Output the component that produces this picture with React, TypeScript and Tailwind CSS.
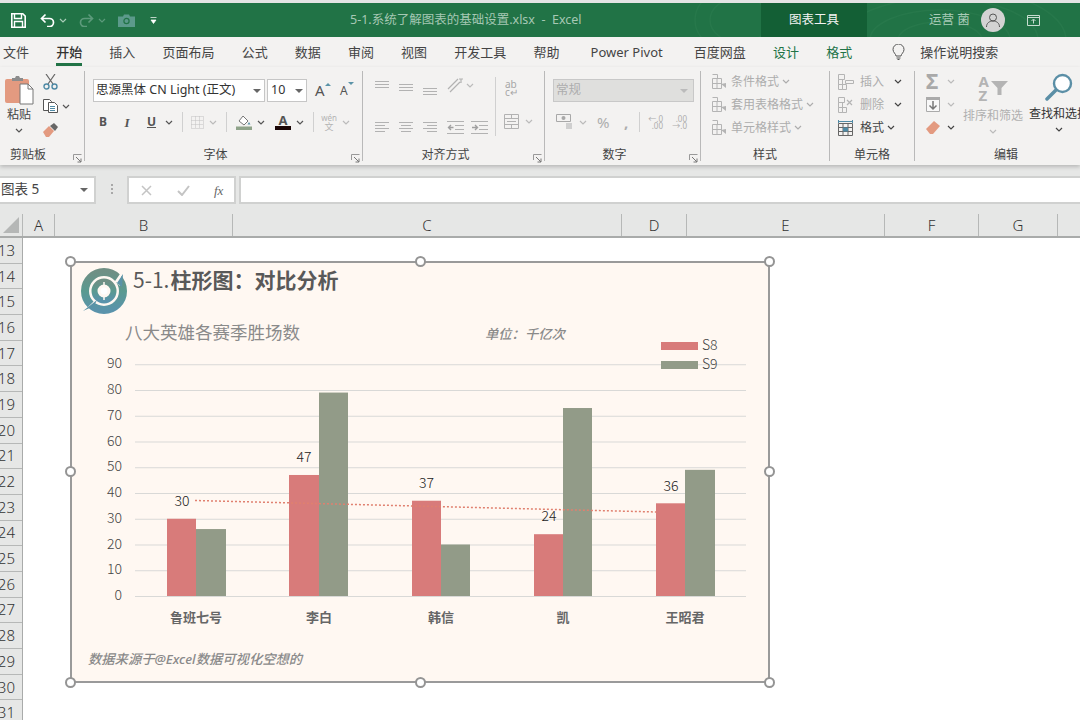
import React from 'react';

const cjk = "font-['Noto_Sans','Noto_Sans_CJK_SC',sans-serif]";
const light = "font-['Noto_Sans_CJK_SC',sans-serif] font-light";

const tabs = [
  { label: '文件' },
  { label: '开始', active: true },
  { label: '插入' },
  { label: '页面布局' },
  { label: '公式' },
  { label: '数据' },
  { label: '审阅' },
  { label: '视图' },
  { label: '开发工具' },
  { label: '帮助' },
  { label: 'Power Pivot', extra: true },
  { label: '百度网盘', extra: true },
  { label: '设计', green: true },
  { label: '格式', green: true },
];

const columns = [
  { label: 'A', w: 32 },
  { label: 'B', w: 178 },
  { label: 'C', w: 389 },
  { label: 'D', w: 65 },
  { label: 'E', w: 198 },
  { label: 'F', w: 94 },
  { label: 'G', w: 79 },
  { label: '', w: 22 },
];

const rows = Array.from({ length: 19 }, (_, i) => 13 + i);

const series = [
  { name: '鲁班七号', x1: 167, w1: 29, x2: 196, w2: 30, s8: 30, s9: 26, lx: 182, ly: 506 },
  { name: '李白', x1: 289, w1: 30, x2: 319, w2: 29, s8: 47, s9: 79, lx: 304, ly: 462 },
  { name: '韩信', x1: 412, w1: 29, x2: 441, w2: 29, s8: 37, s9: 20, lx: 426.5, ly: 488 },
  { name: '凯', x1: 534, w1: 29, x2: 563, w2: 29, s8: 24, s9: 73, lx: 549, ly: 521 },
  { name: '王昭君', x1: 656, w1: 29, x2: 685, w2: 30, s8: 36, s9: 49, lx: 671, ly: 491 },
];

const Chev = ({ c = '#555', className = '' }: { c?: string; className?: string }) => (
  <svg width="8" height="5" viewBox="0 0 8 5" className={className}>
    <path d="M1 1l3 3 3-3" fill="none" stroke={c} strokeWidth="1.2" />
  </svg>
);

const Caret = ({ c = '#666' }: { c?: string }) => (
  <svg width="8" height="4" viewBox="0 0 8 4">
    <path d="M0 0h8L4 4z" fill={c} />
  </svg>
);

const Launcher = () => (
  <svg width="9" height="9" viewBox="0 0 9 9">
    <path d="M0.5 6V0.5H8.5M0.5 0.5" fill="none" stroke="#999" />
    <path d="M3 3l5 5M8 4.5V8H4.5" fill="none" stroke="#777" />
  </svg>
);

const Lines = ({ kind }: { kind: 'left' | 'center' | 'right' }) => {
  const x = kind === 'left' ? [0, 0, 0, 0] : kind === 'center' ? [0, 2, 0, 2] : [0, 4, 0, 4];
  return (
    <svg width="14" height="11" viewBox="0 0 14 11">
      {[0.5, 3.5, 6.5, 9.5].map((y, i) => (
        <line key={y} x1={x[i]} x2={x[i] + (i % 2 ? 10 : 14)} y1={y} y2={y} stroke="#b2b2b2" />
      ))}
    </svg>
  );
};

const Three = () => (
  <svg width="14" height="7" viewBox="0 0 14 7">
    {[0.5, 3.5, 6.5].map((y) => (
      <line key={y} x1="0" x2="14" y1={y} y2={y} stroke="#b2b2b2" />
    ))}
  </svg>
);

const Indent = ({ flip }: { flip?: boolean }) => (
  <svg width="17" height="13" viewBox="0 0 17 13">
    {[0.5, 4.5, 8.5, 12.5].map((y) => (
      <line key={y} x1={y === 0.5 || y === 12.5 ? 0 : 8} x2="17" y1={y} y2={y} stroke="#b2b2b2" />
    ))}
    <path d={flip ? 'M1 6.5h5M4 4l2.5 2.5L4 9' : 'M6.5 6.5h-5M4 4L1.5 6.5 4 9'} fill="none" stroke="#a0a0a0" strokeWidth="1.4" />
  </svg>
);

const GridIcon = ({ c = '#b4b4b4' }: { c?: string }) => (
  <svg width="15" height="15" viewBox="0 0 15 15">
    <path d="M0.5 4.5h9v10h-9zM0.5 9.5h9M5 4.5v10M0.5 0.5h5v4" fill="none" stroke={c} />
    <path d="M9 10l5 4v-5z" fill={c} />
  </svg>
);

const CellIcon = ({ kind }: { kind: 'insert' | 'delete' }) => (
  <svg width="17" height="16" viewBox="0 0 17 16">
    <path d="M0.5 0.5h6v5h-6zM0.5 10.5h4v5h-4zM4.5 10.5h4v5h-4zM0.5 5.5h4v5h-4z" fill="none" stroke="#b4b4b4" />
    {kind === 'insert' ? (
      <path d="M7.5 6.5h8v3h-8z" fill="none" stroke="#b4b4b4" />
    ) : (
      <path d="M9 3l5 5M14 3l-5 5" stroke="#b4b4b4" strokeWidth="1.2" />
    )}
  </svg>
);

const Group = ({ w, label, launcher, pad = 0, children }: { w: number; label: string; launcher?: boolean; pad?: number; children: React.ReactNode }) => (
  <div className="flex flex-col shrink-0 h-[90px] border-r border-[#b9b9b9]" style={{ width: w }}>
    <div className="h-[71px]">{children}</div>
    <div className="flex-1 flex items-center relative pt-[7px]" style={{ paddingRight: pad }}>
      <span className="w-full text-center text-[12px] text-[#444] leading-none">{label}</span>
      {launcher && (
        <span className="absolute right-[2px] bottom-[-2px] flex">
          <Launcher />
        </span>
      )}
    </div>
  </div>
);

const StyleRow = ({ icon, text }: { icon: React.ReactNode; text: string }) => (
  <div className="flex items-center h-[23px]">
    {icon}
    <span className="ml-[4px] text-[12px] leading-none text-[#adadad]">{text}</span>
    <Chev c="#adadad" className="ml-[3px]" />
  </div>
);

const TitleBar = () => (
  <div className="relative h-[37px] bg-[#217346] border-t-[3px] border-[#e4e4e4] flex items-center shrink-0 overflow-hidden">
    <svg className="absolute left-[690px] top-[-3px]" width="390" height="37" viewBox="0 0 390 37">
      {[30, 45, 60, 75, 90, 110].map((r) => (
        <ellipse key={r} cx="50" cy="20" rx={r} ry={r * 0.75} fill="none" stroke="#27784b" strokeWidth="1.5" />
      ))}
      {[30, 50, 70, 90].map((r) => (
        <ellipse key={r} cx="250" cy="40" rx={r * 1.4} ry={r * 0.6} fill="none" stroke="#27784b" strokeWidth="1.5" />
      ))}
    </svg>
    <div className="relative flex items-center w-[350px] pl-[11px]">
      <svg width="15" height="15" viewBox="0 0 15 15">
        <path d="M0.8 0.8h11l2.4 2.4v11H0.8z" fill="none" stroke="#fff" strokeWidth="1.6" />
        <path d="M3.5 1v4.5h7V1M3.5 14V8.5h8V14" fill="none" stroke="#fff" strokeWidth="1.4" />
      </svg>
      <svg className="ml-[14px]" width="15" height="14" viewBox="0 0 15 14">
        <path d="M1.5 5.5h8a4 4 0 0 1 0 8H7M5.5 1.5l-4 4 4 4" fill="none" stroke="#fff" strokeWidth="1.7" />
      </svg>
      <Chev c="#a9cdb8" className="ml-[4px]" />
      <svg className="ml-[12px]" width="15" height="14" viewBox="0 0 15 14">
        <path d="M13.5 5.5h-8a4 4 0 0 0 0 8H8M9.5 1.5l4 4-4 4" fill="none" stroke="#5c9a7b" strokeWidth="1.7" />
      </svg>
      <Chev c="#5c9a7b" className="ml-[4px]" />
      <svg className="ml-[12px]" width="17" height="13" viewBox="0 0 17 13">
        <path d="M0 2.5h5l1-2h5l1 2h5V13H0z" fill="#5c9a8b" />
        <circle cx="8.5" cy="7" r="2.6" fill="none" stroke="#217346" strokeWidth="1.2" />
      </svg>
      <svg className="ml-[15px]" width="7" height="7" viewBox="0 0 7 7">
        <path d="M0.5 0.5h6M1 3h5L3.5 6.5z" fill="#fff" stroke="#fff" strokeWidth="0.7" />
      </svg>
    </div>
    <span className={`relative text-[12.5px] text-[#a6c8b4] whitespace-pre w-[411px] ${cjk}`}>5-1.系统了解图表的基础设置.xlsx  -  Excel</span>
    <div className="relative w-[106px] h-full bg-[#135f35] flex items-center justify-center">
      <span className={`text-[12.5px] text-[#f2f2f2] ${cjk}`}>图表工具</span>
    </div>
    <span className={`relative ml-[62px] text-[12.5px] text-[#a9cbb7] whitespace-pre ${cjk}`}>运营 菌</span>
    <div className="relative ml-[11px] w-[24px] h-[24px] rounded-full bg-[#d3d3d3] flex items-center justify-center">
      <svg width="16" height="16" viewBox="0 0 16 16">
        <circle cx="8" cy="5.5" r="3.5" fill="none" stroke="#555" />
        <path d="M1.5 15c0-4 3-6 6.5-6s6.5 2 6.5 6" fill="none" stroke="#555" />
      </svg>
    </div>
    <svg className="relative ml-[22px]" width="13" height="11" viewBox="0 0 13 11">
      <path d="M0.5 0.5h12v10H0.5zM0.5 2.5h12M6.5 8.5v-4M4.5 6l2-2 2 2" fill="none" stroke="#c7ddd0" />
    </svg>
  </div>
);

const TabBar = () => (
  <div className={`h-[30px] bg-[#f3f2f1] flex items-center pl-[3px] gap-[27.15px] text-[13px] text-[#444] shrink-0 ${cjk}`}>
    {tabs.map((t) => (
      <span
        key={t.label}
        className={`relative leading-none whitespace-nowrap ${t.active ? 'font-medium text-[#333]' : ''} ${t.green ? 'text-[#217346]' : ''} ${t.extra ? 'ml-[4px]' : ''}`}
      >
        {t.label}
        {t.active && <span className="absolute left-0 right-0 top-[17px] h-[3px] bg-[#217346]" />}
      </span>
    ))}
    <span className="flex items-center ml-[13px] gap-[15px]">
      <svg width="13" height="16" viewBox="0 0 13 16">
        <path d="M4 12c0-2-3-3.500-3-6.500a5.500 5.500 0 0 1 11 0C12 8.500 9 10 9 12zM4.500 14h4M5.500 15.500h2" fill="none" stroke="#555" />
      </svg>
      <span className="leading-none">操作说明搜索</span>
    </span>
  </div>
);

const Ribbon = () => (
  <div className={`relative h-[98px] bg-[#f3f2f1] flex items-start pt-[4px] shrink-0 shadow-[0_2px_4px_rgba(0,0,0,0.2)] ${cjk}`}>
    <Group w={85} label="剪贴板" launcher pad={28}>
      <div className="flex pt-[5px] pl-[6px]">
        <div className="flex flex-col items-center w-[26px]">
          <svg width="29" height="30" viewBox="0 0 29 30" className="shrink-0">
            <rect x="0" y="3" width="24" height="24" rx="2" fill="#e39a80" />
            <path d="M7 5V2h3l1-2h3l1 2h3v3z" fill="#8c8c8c" />
            <path d="M15 8h8l5 5v15H15z" fill="#fff" stroke="#777" />
            <path d="M23 8v5h5" fill="none" stroke="#777" />
          </svg>
          <span className="text-[12px] text-[#444] leading-none mt-[3px]">粘贴</span>
          <Chev className="mt-[7px]" />
        </div>
        <div className="flex flex-col items-start ml-[11px] -mt-[2px]">
          <svg width="15" height="16" viewBox="0 0 15 16">
            <path d="M3 0l7 10M12 0L5 10" stroke="#666" strokeWidth="1.2" />
            <circle cx="3.500" cy="12.500" r="2.500" fill="none" stroke="#4f8aa5" strokeWidth="1.400" />
            <circle cx="11.500" cy="12.500" r="2.500" fill="none" stroke="#4f8aa5" strokeWidth="1.400" />
          </svg>
          <div className="flex items-center mt-[9px]">
            <svg width="15" height="14" viewBox="0 0 15 14">
              <path d="M0.500 0.500h6l2 2v9h-8z" fill="#fff" stroke="#555" />
              <path d="M5.500 3.500h6l3 3v7h-9z" fill="#fff" stroke="#555" />
              <path d="M7 7.500h5M7 9.500h5M7 11.500h5" stroke="#4f8aa5" />
            </svg>
            <Chev className="ml-[4px]" />
          </div>
          <svg className="mt-[10px]" width="16" height="14" viewBox="0 0 16 14">
            <path d="M0 9l6-6 5 5-5 6H3z" fill="#e39a80" />
            <path d="M7 3l5 5 3-4-4-4z" fill="#666" />
          </svg>
        </div>
      </div>
    </Group>

    <Group w={278} label="字体" launcher pad={16}>
      <div className="flex flex-col pt-[8px] pl-[8px]">
        <div className="flex items-center">
          <div className="w-[172px] h-[23px] bg-white border border-[#c6c6c6] flex items-center justify-between pl-[2px] pr-[3px]">
            <span className="text-[12.5px] text-[#333] leading-none">思源黑体 CN Light (正文)</span>
            <Caret />
          </div>
          <div className="ml-[2px] w-[40px] h-[23px] bg-white border border-[#c6c6c6] flex items-center justify-between pl-[3px] pr-[3px]">
            <span className="text-[12.5px] text-[#333] leading-none">10</span>
            <Caret />
          </div>
          <span className="ml-[8px] relative text-[15px] leading-none text-[#555] w-[11px]">
            A<span className="absolute right-[-5px] top-[0px] border-x-[3px] border-b-[3px] border-x-transparent border-b-[#5b93a8]" />
          </span>
          <span className="ml-[14px] relative text-[12px] leading-none text-[#555] w-[9px]">
            A<span className="absolute right-[-5px] top-[-3px] border-x-[3px] border-t-[3px] border-x-transparent border-t-[#5b93a8]" />
          </span>
        </div>
        <div className="flex items-center h-[26px] mt-[7px] pl-[5px]">
          <span className="w-[10px] text-center text-[12px] font-bold text-[#555] leading-none">B</span>
          <span className="ml-[14px] w-[10px] text-center text-[13px] italic font-bold text-[#555] leading-none font-['Liberation_Serif',serif]">I</span>
          <span className="ml-[14px] w-[11px] text-center text-[12px] font-bold underline text-[#555] leading-none">U</span>
          <Chev className="ml-[8px]" />
          <span className="ml-[9px] w-px h-[20px] bg-[#d0d0d0]" />
          <svg className="ml-[8px]" width="13" height="13" viewBox="0 0 13 13">
            <path d="M0.500 0.500h12v12h-12zM4.500 0.500v12M8.500 0.500v12M0.500 4.500h12M0.500 8.500h12" fill="none" stroke="#c0c0c0" strokeDasharray="1 1" />
          </svg>
          <Chev c="#bbb" className="ml-[5px]" />
          <span className="ml-[9px] w-px h-[20px] bg-[#d0d0d0]" />
          <svg className="ml-[9px]" width="16" height="16" viewBox="0 0 16 16">
            <path d="M3 7l4-5 5 5-4 4z" fill="#fff" stroke="#777" />
            <path d="M13 8l1.500 2.500h-3z" fill="#5b93a8" />
            <rect x="0" y="12.500" width="16" height="3.500" fill="#8fa38a" />
          </svg>
          <Chev className="ml-[5px]" />
          <span className="ml-[10px] w-[16px] flex flex-col items-center">
            <span className="text-[13px] font-bold leading-[12px] text-[#555]">A</span>
            <span className="block w-[16px] h-[4px] bg-[#1a0606]" />
          </span>
          <Chev className="ml-[5px]" />
          <span className="ml-[9px] w-px h-[20px] bg-[#d0d0d0]" />
          <span className="ml-[7px] w-[16px] flex flex-col items-center text-[#b4b4b4] leading-[9px] text-[8px]">
            <span>wén</span>
            <span className="text-[9px]">文</span>
          </span>
          <Chev c="#bbb" className="ml-[5px]" />
        </div>
      </div>
    </Group>

    <Group w={182} label="对齐方式" launcher pad={16}>
      <div className="flex">
        <div className="flex flex-col pl-[12px] pt-[10px]">
          <div className="flex items-start h-[22px]">
            <span className="w-[24px] flex"><Three /></span>
            <span className="w-[24px] flex pt-[3px]"><Three /></span>
            <span className="w-[24px] flex pt-[7px]"><Three /></span>
            <svg className="-mt-[3px]" width="17" height="15" viewBox="0 0 17 15">
              <path d="M1 11L11 1M3 14L13 4M14 1v4M12 1h4" fill="none" stroke="#b2b2b2" strokeWidth="1.200" />
            </svg>
            <Chev c="#bbb" className="ml-[2px] mt-[2px]" />
          </div>
          <div className="flex items-center h-[22px] mt-[13px]">
            <span className="w-[24px] flex"><Lines kind="left" /></span>
            <span className="w-[24px] flex"><Lines kind="center" /></span>
            <span className="w-[24px] flex"><Lines kind="right" /></span>
            <span className="w-[24px] flex"><Indent /></span>
            <span className="flex"><Indent flip /></span>
          </div>
        </div>
        <div className="ml-[7px] mt-[6px] w-px h-[59px] bg-[#d0d0d0]" />
        <div className="flex flex-col pl-[9px] pt-[9px]">
          <span className="text-[10px] text-[#a6a6a6] leading-[8px] w-[16px]">ab</span>
          <span className="text-[10px] text-[#a6a6a6] leading-[8px] w-[16px]">c↵</span>
          <div className="flex items-center mt-[18px] -ml-px">
            <svg width="15" height="15" viewBox="0 0 15 15">
              <path d="M0.500 0.500h14v14h-14zM0.500 4.500h14M0.500 10.500h14M7.500 0.500v4M7.500 10.500v4M3 7.500h9" fill="none" stroke="#b2b2b2" />
            </svg>
            <Chev c="#bbb" className="ml-[6px]" />
          </div>
        </div>
      </div>
    </Group>

    <Group w={156} label="数字" launcher pad={16}>
      <div className="flex flex-col pt-[8px] pl-[8px]">
        <div className="w-[141px] h-[23px] bg-[#dfdfdd] border border-[#c8c8c8] flex items-center justify-between pl-[2px] pr-[5px]">
          <span className="text-[12.5px] text-[#adadad] leading-none">常规</span>
          <Caret c="#bbb" />
        </div>
        <div className="flex items-center h-[22px] mt-[9px] pl-[3px] text-[#adadad]">
          <svg width="17" height="16" viewBox="0 0 17 16">
            <path d="M0.500 0.500h14v7h-14z" fill="none" stroke="#a8a8a8" />
            <circle cx="7.500" cy="4" r="2" fill="#a8a8a8" />
            <path d="M10 10h6M10 12h6M10 14h6" stroke="#c4c4c4" strokeWidth="1.500" />
          </svg>
          <Chev c="#bbb" className="ml-[6px]" />
          <span className="ml-[10px] text-[15px] leading-none w-[14px]">%</span>
          <span className="ml-[13px] text-[15px] font-bold leading-none w-[6px]">,</span>
          <span className="ml-[9px] w-px h-[20px] bg-[#d0d0d0]" />
          <span className="ml-[8px] w-[15px] flex flex-col items-end text-[8px] leading-[7px]">
            <span>←.0</span>
            <span>.00</span>
          </span>
          <span className="ml-[9px] w-[15px] flex flex-col items-end text-[8px] leading-[7px]">
            <span>.00</span>
            <span>→.0</span>
          </span>
        </div>
      </div>
    </Group>

    <Group w={129} label="样式">
      <div className="flex flex-col -mt-[1px] pl-[11px]">
        <StyleRow icon={<GridIcon />} text="条件格式" />
        <StyleRow icon={<GridIcon />} text="套用表格格式" />
        <StyleRow icon={<GridIcon />} text="单元格样式" />
      </div>
    </Group>

    <Group w={85} label="单元格">
      <div className="flex flex-col -mt-[1px] pl-[8px]">
        <div className="flex items-center h-[23px]">
          <CellIcon kind="insert" />
          <span className="ml-[5px] text-[12px] text-[#adadad] leading-none">插入</span>
          <Chev c="#444" className="ml-[10px]" />
        </div>
        <div className="flex items-center h-[23px]">
          <CellIcon kind="delete" />
          <span className="ml-[5px] text-[12px] text-[#adadad] leading-none">删除</span>
          <Chev c="#444" className="ml-[10px]" />
        </div>
        <div className="flex items-center h-[23px]">
          <svg width="17" height="16" viewBox="0 0 17 16">
            <path d="M0.500 3.500h14v12h-14zM0.500 7.500h14M0.500 11.500h14M5 3.500v12M10 3.500v12" fill="none" stroke="#666" />
            <rect x="5" y="7.500" width="5" height="4" fill="#4f8aa5" />
            <path d="M0.500 0v3M14.500 0v3M1 1.500h13" stroke="#4f8aa5" />
          </svg>
          <span className="ml-[5px] text-[12px] text-[#444] leading-none">格式</span>
          <Chev c="#444" className="ml-[3px]" />
        </div>
      </div>
    </Group>

    <div className="flex-1 h-[90px] flex flex-col overflow-x-clip">
      <div className="h-[71px] flex">
        <div className="flex flex-col pl-[11px] -mt-[1px] w-[46px] shrink-0">
          <div className="flex items-center h-[23px]">
            <span className="text-[21px] font-bold leading-none text-[#a9a9a9] w-[16px]">Σ</span>
            <Chev c="#bbb" className="ml-[5px]" />
          </div>
          <div className="flex items-center h-[23px]">
            <svg width="14" height="15" viewBox="0 0 14 15">
              <path d="M0.500 0.500h13v14h-13z" fill="#f8f8f8" stroke="#aaa" />
              <rect x="0" y="0" width="14" height="3" fill="#aaa" />
              <path d="M7 4v8M3.500 8.500L7 12l3.500-3.500" fill="none" stroke="#777" strokeWidth="1.500" />
            </svg>
            <Chev c="#bbb" className="ml-[7px]" />
          </div>
          <div className="flex items-center h-[23px]">
            <svg width="14" height="13" viewBox="0 0 14 13">
              <path d="M0 8l8-8 6 5-7 8H4z" fill="#e39a80" />
            </svg>
            <Chev c="#444" className="ml-[7px]" />
          </div>
        </div>
        <div className="flex flex-col items-center w-[60px] ml-[2px] pt-[3px] shrink-0">
          <div className="flex items-start h-[31px] text-[#b4b4b4] font-bold">
            <span className="flex flex-col w-[12px] text-[15px] leading-[14px]">
              <span>A</span>
              <span>Z</span>
            </span>
            <svg className="mt-[7px]" width="17" height="14" viewBox="0 0 17 14">
              <path d="M0 0h17l-6.500 7v7h-4V7z" fill="#b4b4b4" />
            </svg>
          </div>
          <span className="text-[12px] text-[#b0b0b0] leading-none mt-[5px] whitespace-nowrap">排序和筛选</span>
          <Chev c="#bbb" className="mt-[7px]" />
        </div>
        <div className="flex flex-col items-center w-[62px] ml-[5px] pt-[2px] shrink-0">
          <svg width="28" height="29" viewBox="0 0 28 29">
            <circle cx="17.500" cy="10.500" r="8.500" fill="#fff" stroke="#5b8fa6" strokeWidth="2.400" />
            <path d="M11 17L2 26" stroke="#5b8fa6" strokeWidth="3.500" strokeLinecap="round" />
          </svg>
          <span className="text-[12px] text-[#333] leading-none mt-[6px] whitespace-nowrap">查找和选择</span>
          <Chev c="#444" className="mt-[7px]" />
        </div>
      </div>
      <div className="flex-1 flex items-center pt-[7px]">
        <span className="w-[182px] shrink-0 text-center text-[12px] text-[#444] leading-none">编辑</span>
      </div>
    </div>
  </div>
);

const FormulaBar = () => (
  <div className={`bg-[#e6e7e6] h-[49px] pt-[11px] flex items-start shrink-0 ${cjk}`}>
    <div className="w-[96px] h-[28px] bg-white border-y-2 border-r-2 border-[#d0d1d0] flex items-center justify-between pr-[6px]">
      <span className="text-[13.5px] text-[#444] leading-none pl-[1px]">图表 5</span>
      <Caret />
    </div>
    <div className="w-[31px] flex flex-col items-center gap-[2px] pt-[8px]">
      <span className="w-[2px] h-[2px] bg-[#a8a8a8]" />
      <span className="w-[2px] h-[2px] bg-[#a8a8a8]" />
      <span className="w-[2px] h-[2px] bg-[#a8a8a8]" />
    </div>
    <div className="w-[109px] h-[28px] bg-white border-2 border-[#d0d1d0] flex items-center pl-[12px]">
      <svg width="11" height="11" viewBox="0 0 11 11">
        <path d="M1 1l9 9M10 1l-9 9" stroke="#c4c4c4" strokeWidth="1.500" />
      </svg>
      <svg className="ml-[25px]" width="13" height="11" viewBox="0 0 13 11">
        <path d="M1 6l4 4 7-9" fill="none" stroke="#c4c4c4" strokeWidth="2" />
      </svg>
      <span className="ml-[24px] text-[13px] italic leading-none text-[#666] font-['Liberation_Serif',serif]">fx</span>
    </div>
    <div className="ml-[3px] flex-1 h-[28px] bg-white border-y-2 border-l-2 border-[#d0d1d0]" />
  </div>
);

const ColumnHeader = () => (
  <div className="h-[24px] bg-[#e6e7e6] border-b-2 border-[#a9abaa] flex shrink-0 font-['Noto_Sans',sans-serif] font-light">
    <div className="w-[23px] border-r border-[#b6b8b7] flex items-end justify-end pr-[3px] pb-[3px]">
      <span className="w-0 h-0 border-l-[16px] border-b-[16px] border-l-transparent border-b-[#b5b7b6]" />
    </div>
    {columns.map((col) => (
      <div
        key={col.w}
        className="border-r border-[#b6b8b7] last:border-r-0 flex items-center justify-center text-[15px] text-[#333] leading-none"
        style={{ width: col.w }}
      >
        {col.label}
      </div>
    ))}
  </div>
);

const Logo = () => (
  <svg width="48" height="48" viewBox="0 0 48 48" className="shrink-0">
    <defs>
      <linearGradient id="lg" x1="0" y1="0" x2="0" y2="1">
        <stop offset="0" stopColor="#6f8f84" />
        <stop offset="0.5" stopColor="#5a9a90" />
        <stop offset="1" stopColor="#5a93ab" />
      </linearGradient>
    </defs>
    <circle cx="24" cy="24" r="19" fill="none" stroke="url(#lg)" strokeWidth="8" />
    <path d="M6 42L17 31l2 3zM42 4l-2 15-4-4-3 2z" fill="#fff8f2" />
    <path d="M3 44l11-5 3-6zM43 7l-1 13-5-4z" fill="#5a93a8" />
    <circle cx="24" cy="24" r="9.500" fill="none" stroke="url(#lg)" strokeWidth="6" />
    <circle cx="24" cy="24" r="3.500" fill="#fff" />
    <path d="M24 15v5M24 28v5" stroke="#fff8f2" strokeWidth="1.500" />
  </svg>
);

const Chart = () => {
  const zero = 596;
  const step = 2.575;
  return (
    <div className={`absolute left-[70px] top-[23px] w-[700px] h-[422px] bg-[#fff8f2] border-2 border-[#9a9a9a] flex flex-col ${cjk}`}>
      <div className="flex items-start h-[56px] pl-[8px] pt-[4px] shrink-0">
        <Logo />
        <span className="ml-[5px] -mt-[1px] text-[21px] leading-[26px] font-bold text-[#595959] whitespace-nowrap">
          <span className="font-['Noto_Sans_CJK_SC',sans-serif] font-normal pr-[1px]">5-1.</span>柱形图：对比分析
        </span>
      </div>
      <svg width="696" height="313" viewBox="72 319 696 313" className="shrink-0">
        <text x="125" y="339" className="text-[17.500px] fill-[#8a8a8a]">八大英雄各赛季胜场数</text>
        <text x="485" y="339" className="text-[13.300px] italic font-medium fill-[#8a8a8a]">单位：千亿次</text>
        <rect x="661" y="342" width="37" height="8" fill="#d87b7a" />
        {Array.from({ length: 10 }, (_, i) => {
          const y = zero - i * 25.75;
          return (
            <g key={i}>
              <line x1="135" x2="746" y1={y + 0.5} y2={y + 0.5} stroke="#d9d9d7" />
              <text x="122" y={y + 4} textAnchor="end" className={`text-[14px] fill-[#444] ${light}`}>
                {i * 10}
              </text>
            </g>
          );
        })}
        <rect x="661" y="361" width="37" height="8" fill="#929b88" />
        <text x="702" y="350" className={`text-[14px] fill-[#444] ${light}`}>S8</text>
        <text x="702" y="369" className={`text-[14px] fill-[#444] ${light}`}>S9</text>
        {series.map((s) => (
          <g key={s.name}>
            <rect x={s.x1} y={zero - s.s8 * step} width={s.w1} height={s.s8 * step} fill="#d87b7a" />
            <rect x={s.x2} y={zero - s.s9 * step} width={s.w2} height={s.s9 * step} fill="#929b88" />
            <text x={s.lx} y={s.ly} textAnchor="middle" className={`text-[14px] fill-[#222] ${light}`}>
              {s.s8}
            </text>
            <text x={s.x2} y="621.500" textAnchor="middle" className="text-[13px] font-bold fill-[#666]">
              {s.name}
            </text>
          </g>
        ))}
        <line x1="195" y1="500.500" x2="656" y2="512" stroke="#e0806f" strokeWidth="1.500" strokeDasharray="2 2" />
      </svg>
      <div className="pl-[16px] pt-[21px] text-[13.300px] italic font-medium text-[#8a8a8a] leading-none whitespace-nowrap">
        数据来源于@Excel数据可视化空想的
      </div>
      {[
        'left-[-7px] top-[-7px]',
        'left-[342.500px] top-[-7px]',
        'right-[-7px] top-[-7px]',
        'left-[-7px] top-[202.500px]',
        'right-[-7px] top-[202.500px]',
        'left-[-7px] bottom-[-7px]',
        'left-[342.500px] bottom-[-7px]',
        'right-[-7px] bottom-[-7px]',
      ].map((pos) => (
        <span key={pos} className={`absolute w-[11px] h-[11px] rounded-full bg-white border-2 border-[#949494] ${pos}`} />
      ))}
    </div>
  );
};

const Sheet = () => (
  <div className="relative flex-1 flex bg-white overflow-hidden">
    <div className="w-[23px] shrink-0 bg-[#e6e7e6] border-r border-[#a9abaa] flex flex-col font-['Noto_Sans',sans-serif] font-light">
      {rows.map((r) => (
        <div
          key={r}
          className="h-[25.7px] shrink-0 border-b border-[#b6b8b7] flex items-center justify-end pr-[7px] text-[15px] text-[#333] leading-none overflow-hidden"
        >
          {r}
        </div>
      ))}
    </div>
    <div className="flex-1" />
    <Chart />
  </div>
);

export default function App() {
  return (
    <div className={`w-[1080px] h-[720px] bg-white flex flex-col overflow-hidden ${cjk}`}>
      <TitleBar />
      <TabBar />
      <Ribbon />
      <FormulaBar />
      <ColumnHeader />
      <Sheet />
    </div>
  );
}
